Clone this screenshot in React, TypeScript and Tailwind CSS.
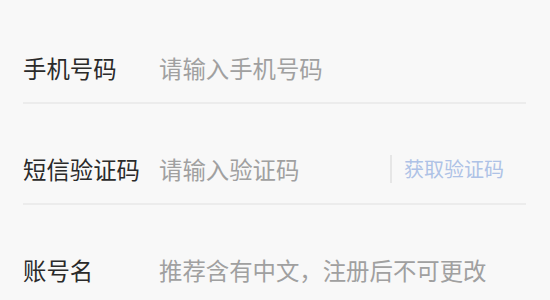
const FONT = "font-['Noto_Sans_CJK_SC','Noto_Sans',sans-serif]";

function Row({
  label,
  placeholder,
  action,
}: {
  label: string;
  placeholder: string;
  action?: string;
}) {
  return (
    <div className="h-[101px] flex items-end pb-[18px] border-b-2 border-[#ececec]">
      <div className="flex items-center w-full h-[32px]">
        <span className="w-[136px] shrink-0 text-[23.4px] leading-[32px] text-[#2a2a2a]">{label}</span>
        <span className="flex-1 text-[23.4px] leading-[32px] text-[#a0a0a0]">{placeholder}</span>
        {action && (
          <div className="flex items-center">
            <div className="w-[2px] h-[28px] bg-[#e6e6e6] mr-[12px]" />
            <span className="text-[20px] leading-[32px] text-[#aec2e6] mr-[22px]">{action}</span>
          </div>
        )}
      </div>
    </div>
  );
}

export default function App() {
  return (
    <div className={`w-[550px] h-[300px] overflow-hidden bg-[#f8f8f8] ${FONT}`}>
      <div className="pl-[23px] pr-[24px] pt-[3px]">
        <Row label="手机号码" placeholder="请输入手机号码" />
        <Row label="短信验证码" placeholder="请输入验证码" action="获取验证码" />
        <Row label="账号名" placeholder="推荐含有中文，注册后不可更改" />
      </div>
    </div>
  );
}
